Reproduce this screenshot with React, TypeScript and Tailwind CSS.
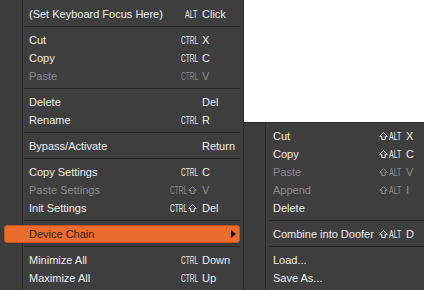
type Mod = 'CTRL' | 'ALT' | 'SHIFT';

interface Item {
  label?: string;
  mods?: Mod[];
  keyName?: string;
  disabled?: boolean;
  sep?: boolean;
  active?: boolean;
  submenu?: boolean;
}

const mainItems: Item[] = [
  { label: '(Set Keyboard Focus Here)', mods: ['ALT'], keyName: 'Click' },
  { sep: true },
  { label: 'Cut', mods: ['CTRL'], keyName: 'X' },
  { label: 'Copy', mods: ['CTRL'], keyName: 'C' },
  { label: 'Paste', mods: ['CTRL'], keyName: 'V', disabled: true },
  { sep: true },
  { label: 'Delete', keyName: 'Del' },
  { label: 'Rename', mods: ['CTRL'], keyName: 'R' },
  { sep: true },
  { label: 'Bypass/Activate', keyName: 'Return' },
  { sep: true },
  { label: 'Copy Settings', mods: ['CTRL'], keyName: 'C' },
  { label: 'Paste Settings', mods: ['CTRL', 'SHIFT'], keyName: 'V', disabled: true },
  { label: 'Init Settings', mods: ['CTRL', 'SHIFT'], keyName: 'Del' },
  { sep: true },
  { label: 'Device Chain', active: true, submenu: true },
  { sep: true },
  { label: 'Minimize All', mods: ['CTRL'], keyName: 'Down' },
  { label: 'Maximize All', mods: ['CTRL'], keyName: 'Up' },
];

const subItems: Item[] = [
  { label: 'Cut', mods: ['SHIFT', 'ALT'], keyName: 'X' },
  { label: 'Copy', mods: ['SHIFT', 'ALT'], keyName: 'C' },
  { label: 'Paste', mods: ['SHIFT', 'ALT'], keyName: 'V', disabled: true },
  { label: 'Append', mods: ['SHIFT', 'ALT'], keyName: 'I', disabled: true },
  { label: 'Delete' },
  { sep: true },
  { label: 'Combine into Doofer', mods: ['SHIFT', 'ALT'], keyName: 'D' },
  { sep: true },
  { label: 'Load...' },
  { label: 'Save As...' },
];

function ShiftArrow() {
  return (
    <svg width="9" height="8" viewBox="0 0 9 8" className="mx-[1px] shrink-0">
      <path d="M4.5 0.7 L8.3 4.3 H6.2 V7.5 H2.8 V4.3 H0.7 Z" fill="none" stroke="currentColor" strokeWidth="1" strokeLinejoin="miter" />
    </svg>
  );
}

function Mods({ mods }: { mods: Mod[] }) {
  return (
    <div className="flex items-center">
      {mods.map((m, i) =>
        m === 'SHIFT' ? (
          <ShiftArrow key={i} />
        ) : m === 'CTRL' ? (
          <span key={i} className="inline-block w-[17px]">
            <span className="inline-block origin-left scale-x-[0.6]">CTRL</span>
          </span>
        ) : (
          <span key={i} className="inline-block w-[13px]">
            <span className="inline-block origin-left scale-x-[0.64]">ALT</span>
          </span>
        )
      )}
    </div>
  );
}

function Row({ item, keyW, sepLeft }: { item: Item; keyW: string; sepLeft: string }) {
  if (item.sep) {
    return (
      <div className={`h-[8px] pt-[3px] ${sepLeft} mr-[3px]`}>
        <div className="h-px bg-[#272727]" />
      </div>
    );
  }

  if (item.active) {
    return (
      <div className="h-[18px] ml-[4px] mr-[3px] flex items-center pl-[24px] rounded-[3px] bg-[#ec6b2f] border border-[#c2551f] text-[#262626]">
        <span className="flex-1 whitespace-nowrap">{item.label}</span>
        {item.submenu && (
          <svg width="5" height="8" viewBox="0 0 5 8" className="mr-[3px]">
            <path d="M0 0 L5 4 L0 8 Z" fill="#141414" />
          </svg>
        )}
      </div>
    );
  }

  return (
    <div
      className={`h-[18px] flex items-center pl-[29px] whitespace-nowrap ${
        item.disabled ? 'text-[#8c8c8c]' : 'text-[#ededed]'
      }`}
    >
      <span className="flex-1">{item.label}</span>
      {item.mods && <Mods mods={item.mods} />}
      <span className={`${keyW} pl-[4px] shrink-0`}>{item.keyName}</span>
    </div>
  );
}

export default function App() {
  return (
    <div className="w-[424px] h-[290px] overflow-hidden bg-white flex items-start font-['Liberation_Sans',Arial,sans-serif] text-[11px] leading-[18px]">
      {/* Main context menu */}
      <div className="w-[244px] shrink-0 border-r border-[#2a2a2a] pt-[5px] pb-[4px] bg-[linear-gradient(to_right,#3c3c3c_22px,#2a2a2a_22px,#2a2a2a_23px,#3e3e3e_23px)]">
        {mainItems.map((item, i) => (
          <Row key={i} item={item} keyW="w-[45px]" sepLeft="ml-[24px]" />
        ))}
      </div>

      {/* Device Chain submenu */}
      <div className="w-[200px] shrink-0 mt-[122px] border-t border-[#2a2a2a] pt-[4px] pb-[4px] bg-[linear-gradient(to_right,#3c3c3c_21px,#2a2a2a_21px,#2a2a2a_22px,#3e3e3e_22px)]">
        {subItems.map((item, i) => (
          <Row key={i} item={item} keyW="w-[42px]" sepLeft="ml-[25px]" />
        ))}
      </div>
    </div>
  );
}
